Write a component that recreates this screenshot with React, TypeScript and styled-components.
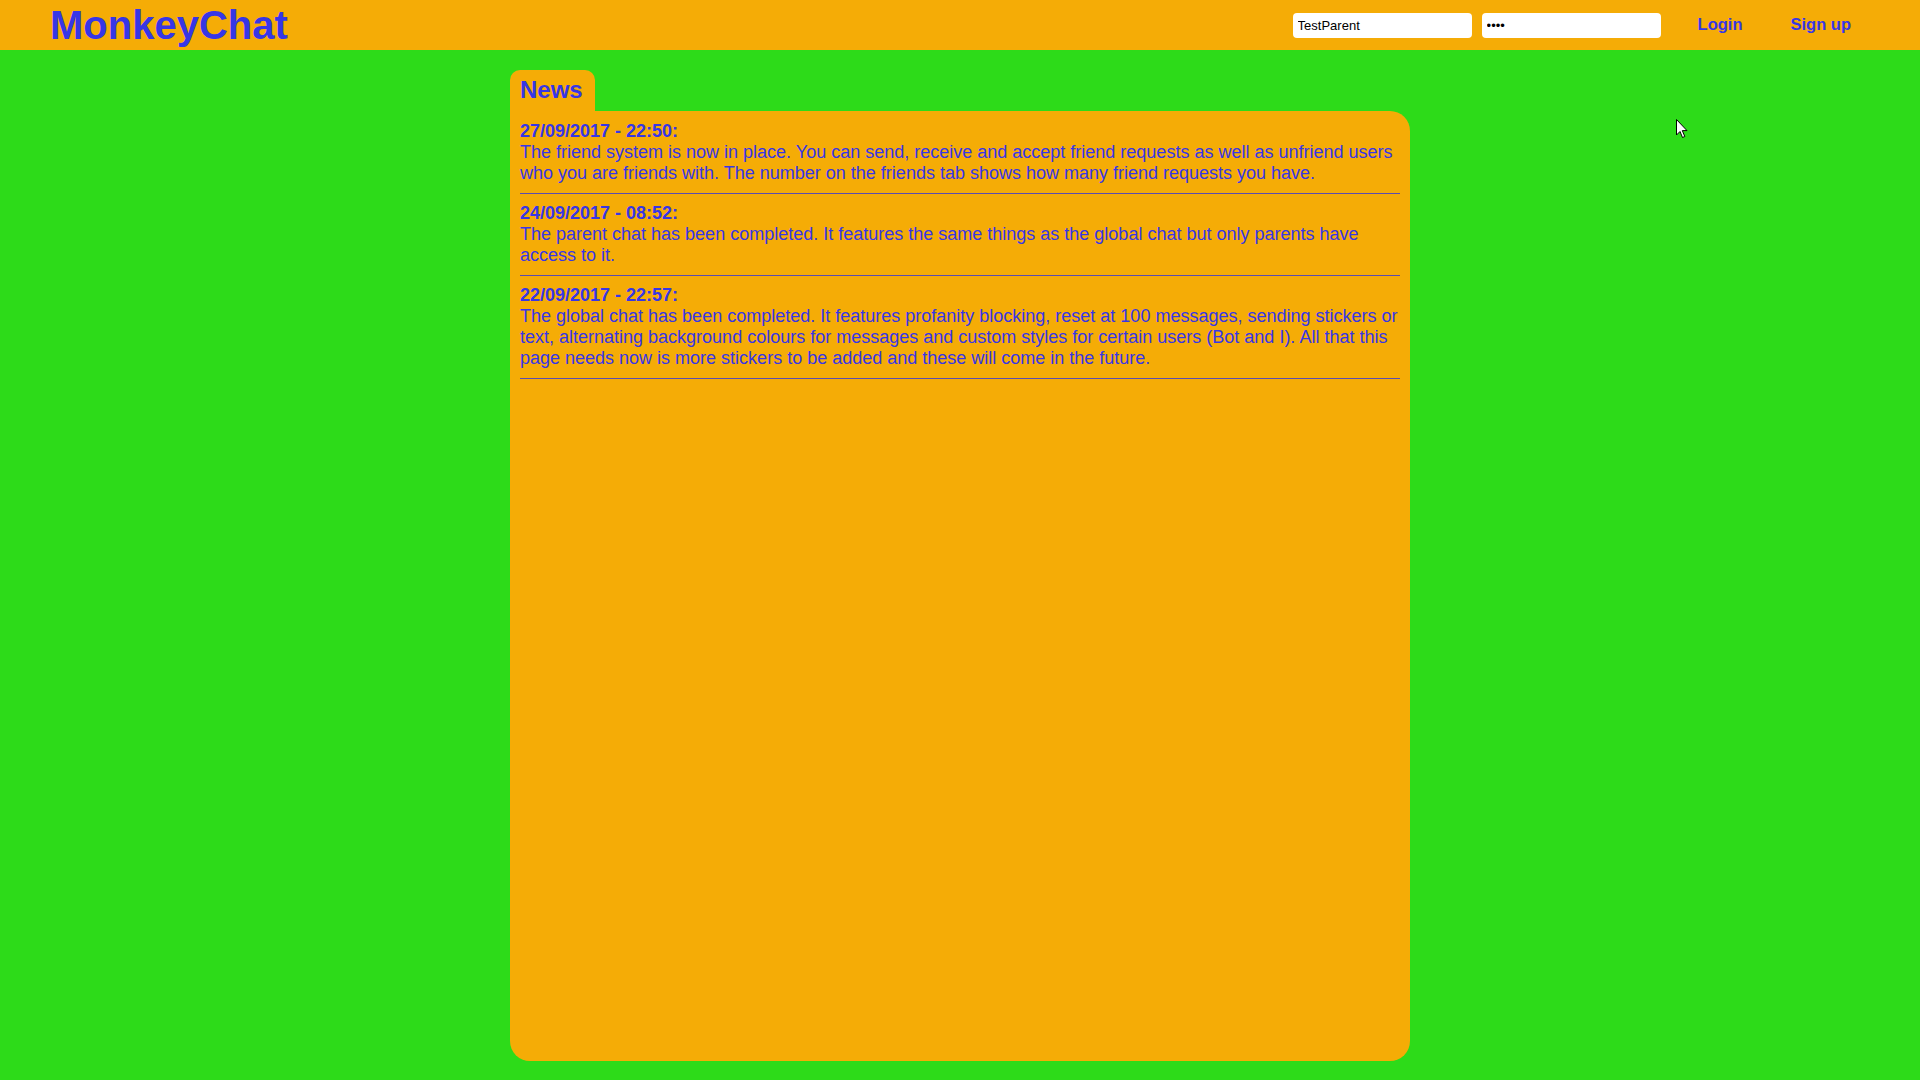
import React from "react";
import styled, { createGlobalStyle } from "styled-components";

const BLUE = "#3736e6";
const ORANGE = "#f5ac06";
const GREEN = "#2ddb19";

const GlobalStyle = createGlobalStyle`
    html, body {
        margin: 0;
        padding: 0;
        background: ${GREEN};
        font-family: "Liberation Sans", Arial, sans-serif;
    }
    * { box-sizing: border-box; }
`

const Page = styled.div`
    position: relative;
    min-height: 1080px;
    display: flex;
    flex-direction: column;
`

const Header = styled.header`
    height: 50px;
    background: ${ORANGE};
    display: flex;
    align-items: center;
    padding: 0 69px 0 50px;
`

const Logo = styled.div`
    font-size: 40px;
    font-weight: bold;
    line-height: 1;
    color: ${BLUE};
    margin-top: -1px;
`

const Spacer = styled.div`
    flex: 1;
`

const LoginForm = styled.form`
    display: flex;
    align-items: center;
    gap: 10px;
    margin: 0;
`

const Field = styled.input`
    width: 179px;
    height: 25px;
    border: none;
    border-radius: 4px;
    background: #fff;
    padding: 0 5px;
    font-family: "Liberation Sans", Arial, sans-serif;
    font-size: 13px;
    color: #000;
    outline: none;
    margin-top: 1px;
`

const NavLink = styled.a<{ $gap: number }>`
    margin-left: ${p => p.$gap}px;
    margin-top: -2px;
    font-size: 16.5px;
    font-weight: bold;
    color: ${BLUE};
    text-decoration: none;
    cursor: pointer;
`

const Main = styled.main`
    display: flex;
    justify-content: center;
    padding-top: 20px;
`

const Board = styled.section`
    width: 900px;
    display: flex;
    flex-direction: column;
    align-items: flex-start;
`

const Tab = styled.div`
    background: ${ORANGE};
    color: ${BLUE};
    font-size: 24px;
    font-weight: bold;
    line-height: 28px;
    padding: 6px 12px 7px 10px;
    border-radius: 10px 10px 0 0;
`

const Panel = styled.div`
    width: 900px;
    height: 950px;
    background: ${ORANGE};
    border-radius: 0 20px 20px 20px;
    padding: 10px 10px;
    color: ${BLUE};
    font-size: 18px;
`

const Entry = styled.article`
    line-height: 21px;
`

const EntryDate = styled.div`
    font-weight: bold;
`

const EntryText = styled.div``

const Divider = styled.hr`
    border: none;
    border-top: 1px solid #5b4cb0;
    height: 0;
    margin: 9px 0 9px;
`

const Cursor = styled.svg`
    position: absolute;
    left: 1676px;
    top: 119px;
`

const news = [
    {
        date: "27/09/2017 - 22:50:",
        text: "The friend system is now in place. You can send, receive and accept friend requests as well as unfriend users who you are friends with. The number on the friends tab shows how many friend requests you have."
    },
    {
        date: "24/09/2017 - 08:52:",
        text: "The parent chat has been completed. It features the same things as the global chat but only parents have access to it."
    },
    {
        date: "22/09/2017 - 22:57:",
        text: "The global chat has been completed. It features profanity blocking, reset at 100 messages, sending stickers or text, alternating background colours for messages and custom styles for certain users (Bot and I). All that this page needs now is more stickers to be added and these will come in the future."
    }
]

export default function App() {
    return <Page>
        <GlobalStyle />
        <Header>
            <Logo>MonkeyChat</Logo>
            <Spacer />
            <LoginForm onSubmit={e => e.preventDefault()}>
                <Field type="text" defaultValue="TestParent" />
                <Field type="password" defaultValue="test" />
            </LoginForm>
            <NavLink $gap={37}>Login</NavLink>
            <NavLink $gap={48}>Sign up</NavLink>
        </Header>
        <Main>
            <Board>
                <Tab>News</Tab>
                <Panel>
                    {news.map(n => <React.Fragment key={n.date}>
                        <Entry>
                            <EntryDate>{n.date}</EntryDate>
                            <EntryText>{n.text}</EntryText>
                        </Entry>
                        <Divider />
                    </React.Fragment>)}
                </Panel>
            </Board>
        </Main>
        <Cursor width="13" height="20" viewBox="0 0 13 20">
            <path d="M0.5 0.5 L0.5 16 L4 12.5 L6.5 18.5 L8.8 17.5 L6.3 11.6 L11 11.6 Z" fill="#fff" stroke="#000" strokeWidth="1" strokeLinejoin="round" />
        </Cursor>
    </Page>
}
